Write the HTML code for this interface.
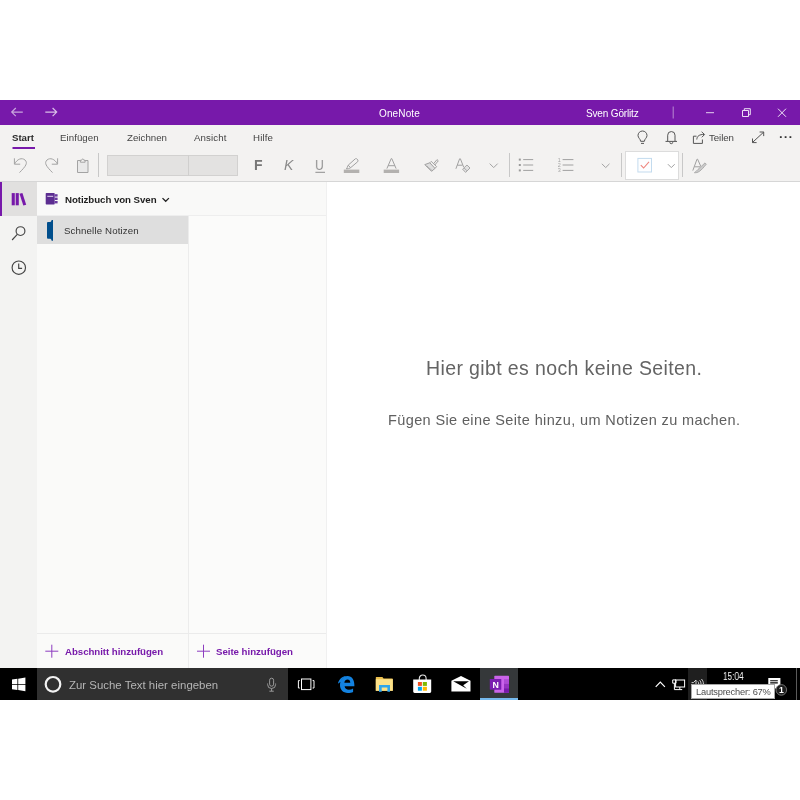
<!DOCTYPE html>
<html lang="de">
<head>
<meta charset="utf-8">
<title>OneNote</title>
<style>
*{box-sizing:border-box;margin:0;padding:0}
html,body{width:800px;height:800px;background:#fff;overflow:hidden}
body{font-family:"Liberation Sans",sans-serif;position:relative;color:#222}
.abs{position:absolute}
.t{position:absolute;white-space:nowrap;line-height:1;will-change:transform}
svg{position:absolute;left:0;top:0;overflow:visible;will-change:transform}
#title{left:0;top:100px;width:800px;height:25px;background:#7719aa}
#ribbon{left:0;top:125px;width:800px;height:57px;background:#f3f2f1;border-bottom:1px solid #d6d6d6}
#nav{left:0;top:182px;width:37px;height:486px;background:#f3f3f2}
#navsel{left:0;top:182px;width:37px;height:34px;background:#e1e0df}
#navbar{left:0;top:182px;width:2px;height:34px;background:#7719aa}
#sections{left:37px;top:182px;width:151px;height:486px;background:#fafaf9}
#pages{left:188px;top:182px;width:139px;height:486px;background:#fbfbfa;border-left:1px solid #ececec;border-right:1px solid #f0f0f0}
#hdr{left:37px;top:182px;width:289px;height:33px;background:#f9f9f8}
#secsel{left:37px;top:216px;width:151px;height:28px;background:#dedede}
#footline{left:37px;top:633px;width:289px;height:1px;background:#ebebeb}
#headline{left:37px;top:215px;width:289px;height:1px;background:#eeeeee}
#taskbar{left:0;top:668px;width:800px;height:32px;background:#000}
#search{left:37px;top:668px;width:251px;height:32px;background:#303030}
#fontbox{left:107px;top:155px;width:131px;height:21px;background:#e3e2e1;border:1px solid #d2d1d0}
#fontdiv{left:188px;top:155px;width:1px;height:21px;background:#d0cfce}
#tagbox{left:625px;top:151px;width:54px;height:29px;background:#fff;border:1px solid #dcdcdc}
.vsep{width:1px;height:24px;top:153px;background:#c8c8c8}
#onact{left:480px;top:668px;width:38px;height:32px;background:#35383a}
#online{left:480px;top:698px;width:38px;height:2px;background:#76b9ed}
#volbg{left:688px;top:668px;width:19px;height:32px;background:#1f1f1f}
#tip{left:691px;top:684px;width:84px;height:15px;background:#fff;border:1px solid #a8a8a8}
</style>
</head>
<body>
<div id="title" class="abs"></div>
<div id="ribbon" class="abs"></div>
<div id="nav" class="abs"></div>
<div id="navsel" class="abs"></div>
<div id="navbar" class="abs"></div>
<div id="sections" class="abs"></div>
<div id="pages" class="abs"></div>
<div id="hdr" class="abs"></div>
<div id="headline" class="abs"></div>
<div id="secsel" class="abs"></div>
<div id="footline" class="abs"></div>
<div id="taskbar" class="abs"></div>
<div id="search" class="abs"></div>
<div id="fontbox" class="abs"></div>
<div id="fontdiv" class="abs"></div>
<div id="tagbox" class="abs"></div>
<div class="abs vsep" style="left:98px"></div>
<div class="abs vsep" style="left:509px"></div>
<div class="abs vsep" style="left:621px"></div>
<div class="abs vsep" style="left:682px"></div>
<div id="onact" class="abs"></div>
<div id="online" class="abs"></div>
<div id="volbg" class="abs"></div>

<!-- ICONS -->
<svg width="800" height="800" viewBox="0 0 800 800" fill="none" stroke-linecap="butt">
<!--ICONS-START-->
<!-- title bar -->
<g stroke="#c9a5dd" stroke-width="1.2">
<path d="M22.8 112.1H11.8M15.8 108L11.7 112.1L15.8 116.2"/>
</g>
<g stroke="#d9bfe7" stroke-width="1.2">
<path d="M45.3 112.1H56.6M52.6 108L56.7 112.1L52.6 116.2"/>
</g>
<path d="M673.2 106.5V118.5" stroke="#b98ad1" stroke-width="1"/>
<g stroke="#fff" stroke-width="1">
<path d="M706 112.7H714" stroke="#e4d1ee"/>
<path d="M742.5 110.5h6v6h-6zM744.3 110.5V108.7h6v6H748.5" stroke="#ede0f4"/>
<path d="M778 108.7L786 116.8M786 108.7L778 116.8" stroke="#f0e6f6"/>
</g>
<!-- ribbon row1 -->
<g stroke="#555" stroke-width="1">
<path d="M640.6 141.3C640.6 139 638 138 638 135.5a4.5 4.5 0 0 1 9 0C647 138 644.4 139 644.4 141.3zM641 143.4H644"/>
<path d="M667.7 141.3V135.2a3.65 3.65 0 0 1 7.3 0V141.3M665.5 141.4H677M669.8 142.2a1.5 1.5 0 0 0 3 0"/>
<path d="M696.5 136.2H693.4V143.4H702.4V139.5"/>
<path d="M696.8 139.5C697 136 699.5 134.3 704 134.5M701.6 131.8L704.6 134.5L701.8 137.3"/>
<path d="M752.4 142.5L763.7 132.1M752.5 138.5V142.6H756.6M759.6 132H763.7V136.1"/>
</g>
<g fill="#333"><rect x="779.9" y="136.2" width="1.8" height="1.8"/><rect x="784.7" y="136.2" width="1.8" height="1.8"/><rect x="789.5" y="136.2" width="1.8" height="1.8"/></g>
<!-- start underline -->
<rect x="12.5" y="147" width="22.5" height="2" fill="#7719aa"/>
<!-- ribbon row2 -->
<g stroke="#a3a3a3" stroke-width="1">
<path d="M14.4 158.3V164.2H20.2M14.6 164C17 159 22 157.3 25 160C28 163 26 166 19.5 172.6"/>
<path d="M57.6 158.3V164.2H51.8M57.4 164C55 159 50 157.3 47 160C44 163 46 166 52.5 172.6"/>
<path d="M77.5 160.5H88V172.5H77.5Z" fill="#e9e9e9"/>
<path d="M80.4 162.2V160.2H81.6C81.8 158.6 83.7 158.6 83.9 160.2H85.1V162.2Z" fill="#f3f2f1"/>
</g>
<rect x="315.4" y="171.8" width="9.6" height="1" fill="#8e8e8e"/>
<!-- highlighter & font color -->
<rect x="343.8" y="169.6" width="15.5" height="3.4" fill="#b3b1af"/>
<rect x="383.7" y="169.6" width="15.4" height="3.4" fill="#b3b1af"/>
<g stroke="#a0a0a0" stroke-width="1">
<path d="M348.2 165.2L355.2 158.9C355.8 158.4 356.6 158.5 357.1 159.1L357.8 160C358.2 160.6 358.1 161.3 357.6 161.8L350.6 167.7ZM348.2 165.2L347.3 167.3L346.4 168.9L348.6 168.6L350.6 167.7"/>
<path d="M386.9 168.6L391.2 158.6H391.8L396.1 168.6M388.1 165.7H394.9"/>
<!-- format painter -->
<path d="M424.8 164.6L429.8 162.8L435 168.4L431.5 171.3Z" fill="#dedede"/><path d="M429.8 162.8L431.2 161.4L436.6 166.6L435 168.4M433.5 163.8L437 159.6L438.3 160.8L434.8 165"/>
<path d="M427.3 166.6L432.2 170.6M426.2 166L428 167" stroke-width=".7"/>
<!-- A eraser -->
<path d="M455.9 168.8L459.6 158.8H460.4L463.6 167M457.2 165.2H462.4"/>
<path d="M462.6 169.2L467 165L470 168L465.6 172.4Z" stroke-width=".9" fill="#e2e2e2"/><path d="M464 167.8L467 170.8" stroke-width=".9"/>
<!-- chevrons -->
<path d="M489.7 163.6L493.7 167.6L497.7 163.6"/>
<path d="M601.9 163.8L605.7 167.6L609.5 163.8"/>
<path d="M667.9 164.2L671.3 167.6L674.7 164.2"/>
<!-- bullets -->
<path d="M523.2 159.6H533.2M523.2 165H533.2M523.2 170.4H533.2"/>
<path d="M562.6 159.6H573.4M562.6 165H573.4M562.6 170.4H573.4"/>
</g>
<g fill="#9a9a9a"><rect x="518.8" y="158.6" width="2" height="2"/><rect x="518.8" y="164" width="2" height="2"/><rect x="518.8" y="169.4" width="2" height="2"/></g>
<g font-family="Liberation Sans, sans-serif" font-size="5.4" fill="#a4a4a4" stroke="none"><text x="557.8" y="161.5">1</text><text x="557.8" y="166.9">2</text><text x="557.8" y="172.3">3</text></g>
<!-- tag checkbox -->
<rect x="637.9" y="158.4" width="13.6" height="13.6" fill="#fdfeff" stroke="#c3dbee" stroke-width="1"/>
<path d="M640.8 165.2L643.6 168L649 161.8" stroke="#ef877f" stroke-width="1.1"/>
<!-- A brush -->
<g stroke="#a0a0a0" stroke-width="1">
<path d="M692.8 170.6L697 159.2H697.6L700.9 166.6M694.4 166.8H700.2"/>
<path d="M705 162.9L706.3 164.2C704 167 701.6 169.8 699.4 171.4C697.8 172.4 696 172.9 694.4 172.7C696 171.8 696.8 170.6 698 169.4C700.4 167.2 702.8 165 705 162.9Z" fill="#cbcbcb" stroke-width=".8"/>
</g>
<!-- nav icons -->
<g fill="#7719aa"><rect x="11.7" y="193.1" width="3.1" height="12.2"/><rect x="15.7" y="193.1" width="3.1" height="12.2"/><path d="M19.5 193.7L22.4 192.9L26.2 204.7L23.3 205.5Z"/></g>
<g stroke="#444" stroke-width="1.15">
<circle cx="20.5" cy="231.1" r="4.4"/><path d="M17.3 234.4L12.1 240"/>
<circle cx="18.8" cy="267.7" r="6.7"/><path d="M18.7 263.6V268.4H22.1"/>
</g>
<!-- notebook icon -->
<g fill="#5c2e91"><rect x="45.7" y="193" width="9" height="11.5" rx=".7"/><rect x="54.7" y="194.2" width="2.9" height="2.4" fill="#6a3aa0"/><rect x="54.7" y="197.6" width="2.9" height="2.4" fill="#6a3aa0"/><rect x="54.7" y="201" width="2.9" height="2.4" fill="#6a3aa0"/></g>
<path d="M47.3 196.3H53.2" stroke="#e3d6f1" stroke-width="1"/>
<path d="M162.5 198.1L165.7 201.3L168.9 198.1" stroke="#222" stroke-width="1.3"/>
<!-- section tab icon -->
<path d="M47 223.4C47 222.5 47.4 222.1 48.3 222.1H49.6C50.8 222.1 51.4 221.5 51.6 220.1H53V240.7H51.6C51.4 239.3 50.8 238.7 49.6 238.7H48.3C47.4 238.7 47 238.3 47 237.4Z" fill="#004e8c"/>
<!-- plus icons -->
<g stroke="#8d3dc0" stroke-width="1"><path d="M45.3 651.2H58.3M51.8 644.7V657.7"/><path d="M197 651.2H210M203.5 644.7V657.7"/></g>
<!-- TASKBAR -->
<g fill="#fff">
<path d="M12 679.6L17.4 678.8V684H12ZM18.2 678.7L25.4 677.6V684H18.2ZM12 684.8H17.4V690L12 689.2ZM18.2 684.8H25.4V691.2L18.2 690.1Z"/>
</g>
<circle cx="53" cy="684.3" r="7.3" stroke="#f2f2f2" stroke-width="2.2"/>
<!-- mic -->
<g stroke="#9a9a9a" stroke-width="1"><rect x="269.6" y="678.2" width="4" height="8" rx="2"/><path d="M267.6 683.5V684.5a4 4 0 0 0 8 0V683.5M271.6 688.5V691M269.4 691.2H273.8"/></g>
<!-- task view -->
<g stroke="#fff" stroke-width="1"><rect x="301.5" y="679" width="9.4" height="10.6"/><path d="M299.8 680.6H298.4V688H299.8M312.6 680.6H314V688H312.6"/></g>
<!-- edge -->
<path fill-rule="evenodd" fill="#1382e0" d="M354.4 686.3H344.6C344.8 688.6 346.6 689.8 348.9 689.8C350.5 689.8 351.9 689.4 353.1 688.6V691.9C351.7 692.6 349.9 693 347.8 693C343 693 340 689.7 340 685.3C340 680 343 675.9 347.5 675.9C352 675.9 354.6 679.6 354.4 686.3ZM344.3 682.8H350.3C350.2 680.8 349.2 679.6 347.5 679.6C345.9 679.6 344.7 680.8 344.3 682.8Z"/>
<path fill="#1382e0" d="M338 683.8C338.5 679.6 341.8 676.4 346.4 675.9C343.4 677.2 341.4 679.4 340.8 682C339.6 682.3 338.7 682.9 338 683.8Z"/>
<!-- explorer -->
<g><path d="M375.8 677.6C375.8 677.2 376 677 376.4 677H382.4L383.6 678.4H392.2C392.6 678.4 392.8 678.6 392.8 679V690.8H375.8Z" fill="#ecc04e"/><path d="M375.8 679.2H392.8V690.8H375.8Z" fill="#fde28a"/><path d="M379 685H390V691.7H387.4V687.4H381.7V691.7H379Z" fill="#2fa6ec"/></g>
<!-- store -->
<g><path d="M419.3 680V678.4a3.4 3.4 0 0 1 6.8 0V680" stroke="#e6e6e6" stroke-width="1.1"/><path d="M413.2 679.5H431.2V691.6C431.2 692.5 430.6 693 429.8 693H414.6C413.8 693 413.2 692.5 413.2 691.6Z" fill="#fff"/><rect x="417.9" y="682" width="4" height="3.9" fill="#f25022"/><rect x="422.8" y="682" width="4.1" height="3.9" fill="#7fba00"/><rect x="417.9" y="686.8" width="4" height="3.9" fill="#00a4ef"/><rect x="422.8" y="686.8" width="4.1" height="3.9" fill="#ffb900"/></g>
<!-- mail -->
<g><path d="M451.4 680.8L461 676L470.5 680.8V691.5H451.4Z" fill="#fff"/><path d="M453.2 681.3H469L463.2 685.3L466.8 688.7Z" fill="#000"/></g>
<!-- onenote -->
<g><rect x="494.3" y="675.8" width="14.7" height="17" rx=".6" fill="#ca64ea"/><rect x="504" y="679.2" width="5" height="4.5" fill="#ae4bd5"/><rect x="504" y="683.7" width="5" height="4.5" fill="#9332bf"/><rect x="504" y="688.2" width="5" height="4.6" fill="#7719aa"/><rect x="489.8" y="679" width="11.5" height="10.8" rx=".6" fill="#7a1db0"/></g>
<text x="492.5" y="687.6" font-family="Liberation Sans, sans-serif" font-weight="bold" font-size="8.8" fill="#fff">N</text>
<!-- tray -->
<path d="M655.7 686.8L660.3 682.2L664.9 686.8" stroke="#fff" stroke-width="1.2"/>
<g stroke="#fff" stroke-width="1"><rect x="675.6" y="680" width="9" height="7"/><path d="M679.8 687V689.4M674.4 689.6H682.2M672.7 679.9H676V683.2H672.7ZM674.4 683.2V689.6"/></g>
<g stroke="#e4e4e4" stroke-width=".9"><path d="M691.6 682.6H693.4L696 680V684.4M697.8 681.4C698.4 682 698.7 682.8 698.7 684M699.6 680.2C700.6 681.2 701 682.4 701 684M701.4 679C702.8 680.4 703.4 682 703.4 684"/></g>
<!-- action center -->
<g><path d="M768.3 678H780.4V688.4H772L768.3 691.4Z" fill="#fff"/><path d="M770.2 680.8H777.8M770.2 682.9H777.8" stroke="#000" stroke-width="1.1"/></g>
<circle cx="781.3" cy="689.9" r="5.3" fill="#1c1c1c" stroke="#7a7a7a" stroke-width=".9"/>
<rect x="796" y="668" width="1" height="32" fill="#5a5a5a"/>
<!--ICONS-END-->
</svg>

<div id="tip" class="abs"></div>

<!-- texts -->
<div class="t" id="tx-app" style="left:379.4px;top:109px;font-size:10px;letter-spacing:0.13px;color:#fff">OneNote</div>
<div class="t" id="tx-user" style="left:586.3px;top:109px;font-size:10px;letter-spacing:-0.16px;color:#fff">Sven Görlitz</div>
<div class="t" id="tx-start" style="left:12.2px;top:133.2px;font-size:9.7px;letter-spacing:-0.04px;color:#2b2b2b;font-weight:bold">Start</div>
<div class="t" id="tx-einf" style="left:60.4px;top:133.2px;font-size:9.7px;letter-spacing:0.05px;color:#444">Einfügen</div>
<div class="t" id="tx-zei" style="left:127.4px;top:133.2px;font-size:9.7px;letter-spacing:0.02px;color:#444">Zeichnen</div>
<div class="t" id="tx-ans" style="left:194.4px;top:133.2px;font-size:9.7px;letter-spacing:0.12px;color:#444">Ansicht</div>
<div class="t" id="tx-hil" style="left:253.4px;top:133.2px;font-size:9.7px;letter-spacing:0.15px;color:#444">Hilfe</div>
<div class="t" id="tx-teil" style="left:709px;top:133.4px;font-size:9.7px;letter-spacing:-0.08px;color:#444">Teilen</div>
<div class="t" id="tx-nb" style="left:64.8px;top:195px;font-size:9.7px;letter-spacing:-0.06px;color:#1e1e1e;font-weight:bold">Notizbuch von Sven</div>
<div class="t" id="tx-sn" style="left:64.4px;top:226px;font-size:9.7px;letter-spacing:0.13px;color:#333">Schnelle Notizen</div>
<div class="t" id="tx-h1" style="left:426px;top:358.5px;font-size:19.5px;letter-spacing:0.38px;color:#646464">Hier gibt es noch keine Seiten.</div>
<div class="t" id="tx-h2" style="left:388px;top:412.7px;font-size:14.5px;letter-spacing:0.38px;color:#606060">Fügen Sie eine Seite hinzu, um Notizen zu machen.</div>
<div class="t" id="tx-abs" style="left:65.3px;top:647.1px;font-size:9.7px;letter-spacing:-0.05px;color:#7719aa;font-weight:bold">Abschnitt hinzufügen</div>
<div class="t" id="tx-sei" style="left:216.2px;top:647.1px;font-size:9.7px;letter-spacing:-0.04px;color:#7719aa;font-weight:bold">Seite hinzufügen</div>
<div class="t" id="tx-search" style="left:68.8px;top:679.5px;font-size:11.4px;letter-spacing:.02px;color:#b6b6b6">Zur Suche Text hier eingeben</div>
<div class="t" id="tx-time" style="left:722.8px;top:671.6px;font-size:10px;letter-spacing:0;transform:scaleX(.82);transform-origin:0 0;color:#fff">15:04</div>
<div class="t" id="tx-tip" style="left:695.6px;top:687.5px;font-size:9.3px;letter-spacing:-.2px;color:#4d4d4d">Lautsprecher: 67%</div>
<div class="t" id="tx-f" style="left:253.6px;top:158.2px;font-size:14px;color:#777;font-weight:bold">F</div>
<div class="t" id="tx-k" style="left:283.6px;top:158.2px;font-size:14px;color:#8a8a8a;font-style:italic">K</div>
<div class="t" id="tx-u" style="left:315.4px;top:158.2px;font-size:14px;color:#8e8e8e;transform:scaleX(.86);transform-origin:0 0">U</div>
<div class="t" id="tx-badge" style="left:778.6px;top:685.8px;font-size:8.6px;color:#fff;font-weight:bold">1</div>
</body>
</html>
